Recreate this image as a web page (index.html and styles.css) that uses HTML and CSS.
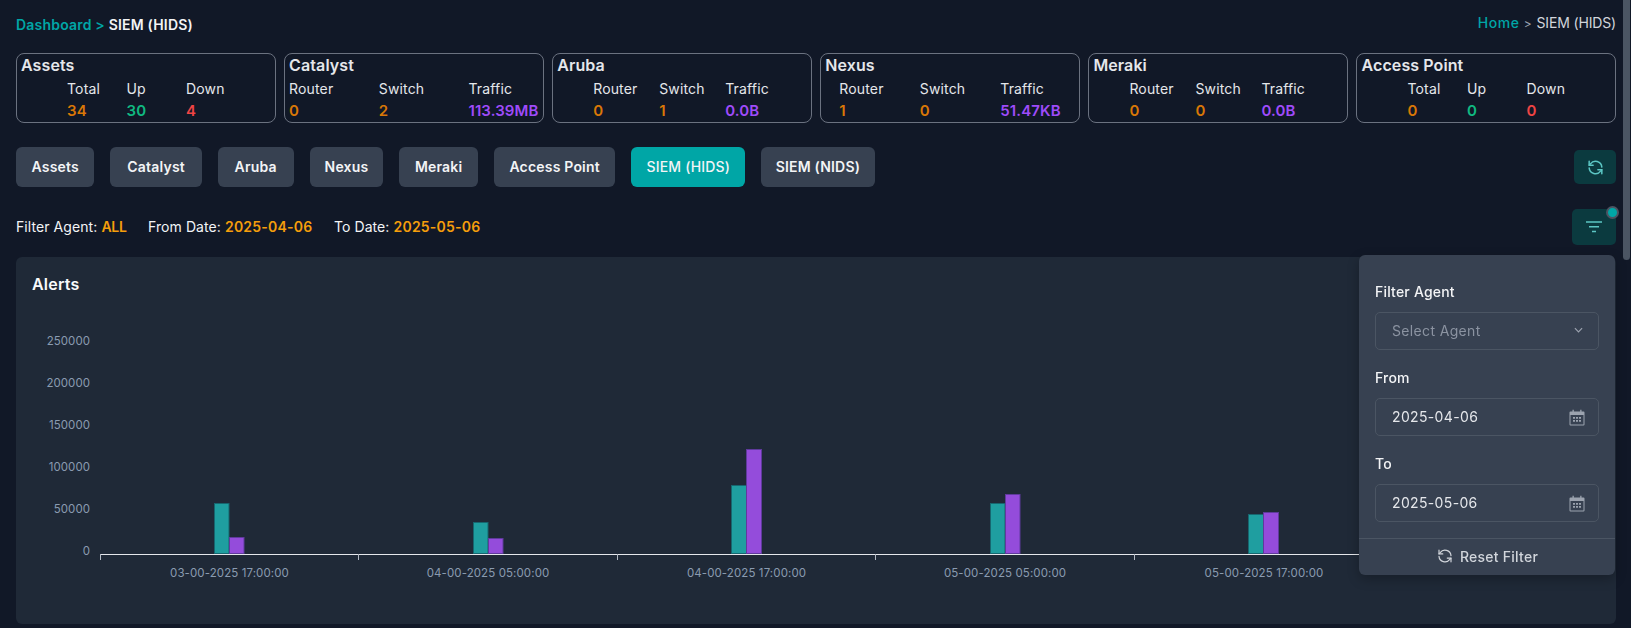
FILE: index.html
```html
<!DOCTYPE html>
<html lang="en">
<head>
<meta charset="utf-8">
<title>SIEM (HIDS)</title>
<link rel="stylesheet" href="styles.css">
</head>
<body>
<svg class="defs" width="0" height="0" aria-hidden="true">
  <defs>
    <symbol id="i-refresh" viewBox="0 0 24 24">
      <path d="M20 11.5A8 8 0 0 0 5.6 7.4L4 9.2" />
      <path d="M4 4.2v5h5" />
      <path d="M4 12.5a8 8 0 0 0 14.4 4.1l1.6-1.8" />
      <path d="M20 19.8v-5h-5" />
    </symbol>
    <symbol id="i-cal" viewBox="0 0 16 17">
      <path class="cal-body" d="M1.5 2.5h13a1 1 0 0 1 1 1v12a1 1 0 0 1-1 1h-13a1 1 0 0 1-1-1v-12a1 1 0 0 1 1-1zM1.5 6v9.500h13V6z" />
      <path class="cal-body" d="M3.500 .8h1.300v2.500H3.500zM11.200 .8h1.300v2.500h-1.300zM4 8h2v1.700H4zM7 8h2v1.700H7zM10 8h2v1.700h-2zM4 11h2v1.700H4zM7 11h2v1.700H7zM10 11h2v1.700h-2z" />
    </symbol>
  </defs>
</svg>
<div class="page">
  <header class="crumbs">
    <div class="crumb-left"><span class="teal">Dashboard &gt;</span> SIEM (HIDS)</div>
    <div class="crumb-right"><span class="teal">Home</span><span class="sep">&gt;</span>SIEM (HIDS)</div>
  </header>

  <section class="cards">
    <article class="card">
      <h3 class="card-title">Assets</h3>
      <div class="stats stats-assets">
        <span>Total</span><span>Up</span><span>Down</span>
        <b class="orange">34</b><b class="green">30</b><b class="red">4</b>
      </div>
    </article>
    <article class="card">
      <h3 class="card-title">Catalyst</h3>
      <div class="stats stats-catalyst">
        <span>Router</span><span>Switch</span><span>Traffic</span>
        <b class="orange">0</b><b class="orange">2</b><b class="purple">113.39MB</b>
      </div>
    </article>
    <article class="card">
      <h3 class="card-title">Aruba</h3>
      <div class="stats stats-aruba">
        <span>Router</span><span>Switch</span><span>Traffic</span>
        <b class="orange">0</b><b class="orange">1</b><b class="purple">0.0B</b>
      </div>
    </article>
    <article class="card">
      <h3 class="card-title">Nexus</h3>
      <div class="stats stats-nexus">
        <span>Router</span><span>Switch</span><span>Traffic</span>
        <b class="orange">1</b><b class="orange">0</b><b class="purple">51.47KB</b>
      </div>
    </article>
    <article class="card">
      <h3 class="card-title">Meraki</h3>
      <div class="stats stats-aruba">
        <span>Router</span><span>Switch</span><span>Traffic</span>
        <b class="orange">0</b><b class="orange">0</b><b class="purple">0.0B</b>
      </div>
    </article>
    <article class="card">
      <h3 class="card-title">Access Point</h3>
      <div class="stats stats-assets">
        <span>Total</span><span>Up</span><span>Down</span>
        <b class="orange">0</b><b class="green">0</b><b class="red">0</b>
      </div>
    </article>
  </section>

  <nav class="tabs">
    <button class="tab">Assets</button>
    <button class="tab tab-l">Catalyst</button>
    <button class="tab tab-l">Aruba</button>
    <button class="tab tab-s">Nexus</button>
    <button class="tab">Meraki</button>
    <button class="tab">Access Point</button>
    <button class="tab tab-s active">SIEM (HIDS)</button>
    <button class="tab tab-xs">SIEM (NIDS)</button>
    <button class="icon-btn refresh" aria-label="Refresh"><svg class="ico"><use href="#i-refresh"/></svg></button>
  </nav>

  <div class="filter-row">
    <div class="filter-text">
      <span>Filter Agent: <b class="all">ALL</b></span>
      <span>From Date: <b>2025-04-06</b></span>
      <span>To Date: <b>2025-05-06</b></span>
    </div>
    <button class="icon-btn filter" aria-label="Filter">
      <svg class="ico-filter" viewBox="0 0 16 12"><path d="M0 1h16M3 5.800h10M6 10.500h4"/></svg>
      <span class="dot"></span>
    </button>

    <aside class="popover">
      <div class="pop-body">
        <label class="pop-label">Filter Agent</label>
        <div class="field">
          <span class="placeholder">Select Agent</span>
          <svg class="chev" viewBox="0 0 10 6"><path d="M1 1l4 4 4-4"/></svg>
        </div>
        <label class="pop-label">From</label>
        <div class="field">
          <span>2025-04-06</span>
          <svg class="cal"><use href="#i-cal"/></svg>
        </div>
        <label class="pop-label">To</label>
        <div class="field">
          <span>2025-05-06</span>
          <svg class="cal"><use href="#i-cal"/></svg>
        </div>
      </div>
      <div class="pop-foot">
        <svg class="ico-reset"><use href="#i-refresh"/></svg>
        <span>Reset Filter</span>
      </div>
    </aside>
  </div>

  <section class="panel">
    <h2 class="panel-title">Alerts</h2>
    <svg class="chart" width="1600" height="328" viewBox="16 296 1600 328">
      <g class="ylab">
        <text x="90" y="345">250000</text>
        <text x="90" y="387">200000</text>
        <text x="90" y="429">150000</text>
        <text x="90" y="471">100000</text>
        <text x="90" y="513">50000</text>
        <text x="90" y="555">0</text>
      </g>
      <g class="bar-t">
        <rect x="214.500" y="503.500" width="14.500" height="50"/>
        <rect x="473.500" y="522.500" width="14.500" height="31"/>
        <rect x="731.500" y="485.500" width="15" height="68"/>
        <rect x="990.500" y="503.500" width="14.500" height="50"/>
        <rect x="1248.500" y="514.500" width="15" height="39"/>
      </g>
      <g class="bar-p">
        <rect x="229.500" y="537.500" width="14.500" height="16"/>
        <rect x="488.500" y="538.500" width="14.500" height="15"/>
        <rect x="746.500" y="449.500" width="15" height="104"/>
        <rect x="1005.500" y="494.500" width="14.500" height="59"/>
        <rect x="1263.500" y="512.500" width="15" height="41"/>
      </g>
      <path class="axis" d="M100 554.500H1359"/>
      <path class="tick" d="M100.500 554v6M358.500 554v6M617.500 554v6M875.500 554v6M1134.500 554v6"/>
      <g class="xlab">
        <text x="229.500" y="577">03-00-2025 17:00:00</text>
        <text x="488" y="577">04-00-2025 05:00:00</text>
        <text x="746.500" y="577">04-00-2025 17:00:00</text>
        <text x="1005" y="577">05-00-2025 05:00:00</text>
        <text x="1264" y="577">05-00-2025 17:00:00</text>
      </g>
    </svg>
  </section>
</div>
<div class="scroll-thumb"></div>
</body>
</html>
```
FILE: styles.css
```css
* { box-sizing: border-box; }
html, body { margin: 0; height: 628px; overflow: hidden; }
body {
  background: #111827;
  color: #f3f4f6;
  font-family: Inter, "Open Sans", "Liberation Sans", sans-serif;
  font-size: 14px;
}
.defs { position: absolute; }
.page { padding: 13px 15px 0 16px; width: 1631px; }
.teal { color: #00a6a6; }

.crumbs { display: flex; justify-content: space-between; align-items: flex-start; height: 40px; }
.crumb-left { font-weight: 600; line-height: 24px; letter-spacing: .2px; }
.crumb-right { line-height: 20px; color: #d1d5db; letter-spacing: -.15px; }
.crumb-right .teal { font-weight: 500; letter-spacing: .6px; }
.sep { margin: 0 5px 0 4px; color: #9ca3af; font-size: 12px; }

.cards { display: grid; grid-template-columns: repeat(6, minmax(0, 1fr)); gap: 8.6px; }
.card {
  height: 70px;
  border: 1px solid #6b7280;
  border-radius: 8px;
  padding: 0 4px;
}
.card-title {
  margin: 0;
  font-size: 16px;
  font-weight: 600;
  line-height: 22px;
  color: #e5e7eb;
  letter-spacing: .1px;
}
.stats { display: grid; grid-template-rows: 21px 23px; line-height: 21px; margin-top: 2px; color: #e5e7eb; }
.stats b { font-size: 15px; font-weight: 600; line-height: 23px; letter-spacing: .1px; white-space: nowrap; }
.stats span { letter-spacing: .15px; }
.stats-assets { grid-template-columns: repeat(3, 59.500px); padding-left: 46px; }
.stats-catalyst { grid-template-columns: repeat(3, 89.700px); }
.stats-aruba { grid-template-columns: repeat(3, 66px); padding-left: 36px; }
.stats-nexus { grid-template-columns: repeat(3, 80.500px); padding-left: 14px; }
.orange { color: #d97706; }
.green { color: #10b981; }
.red { color: #ef4444; }
.purple { color: #9f4bfa; }

.tabs { display: flex; align-items: center; gap: 16px; margin-top: 24px; height: 40px; }
.tab {
  height: 40px;
  padding: 0 15.500px;
  border: 0;
  border-radius: 6px;
  background: #374151;
  color: #f3f4f6;
  font: 600 14px/20px Inter, "Liberation Sans", sans-serif;
  letter-spacing: .2px;
}
.tab-l { padding: 0 16.800px; }
.tab-s { padding: 0 15px; }
.tab-xs { padding: 0 14.500px; }
.tab.active { background: #00a6a6; font-weight: 500; }
.icon-btn {
  border: 0;
  border-radius: 5px;
  background: #0b3a3f;
  padding: 0;
  display: flex;
  align-items: center;
  justify-content: center;
  color: #5cc6c4;
  position: relative;
}
.refresh { width: 42px; height: 34px; margin-left: auto; }
.ico, .ico-reset { fill: none; stroke: currentColor; stroke-width: 1.900; stroke-linecap: round; stroke-linejoin: round; }
.ico { width: 19px; height: 19px; }
.ico-reset { width: 18px; height: 18px; stroke-width: 1.600; }

.filter-row {
  position: relative;
  display: flex;
  justify-content: space-between;
  align-items: center;
  margin-top: 22px;
  height: 36px;
}
.filter-text { display: flex; gap: 21.500px; padding-bottom: 1px; letter-spacing: .08px; color: #f3f4f6; }
.filter-text b { color: #f59e0b; font-weight: 600; letter-spacing: .22px; }
.filter-text .all { letter-spacing: -.3px; }
.filter { width: 44px; height: 36px; }
.ico-filter { width: 16px; height: 12px; fill: none; stroke: #5cc6c4; stroke-width: 1.600; }
.dot {
  position: absolute;
  top: -3px;
  right: -3px;
  width: 13px;
  height: 13px;
  border-radius: 50%;
  background: #00a6a6;
  border: 2px solid #4b5563;
}

.popover {
  position: absolute;
  top: 46px;
  right: 1px;
  width: 256px;
  height: 320px;
  background: #374151;
  border-radius: 6px;
  box-shadow: 0 4px 12px rgba(0, 0, 0, .25);
  z-index: 2;
  display: flex;
  flex-direction: column;
}
.pop-body { padding: 27px 16px 15px; flex: 1; }
.pop-label { display: block; line-height: 20px; margin-bottom: 10px; font-weight: 500; letter-spacing: .2px; color: #f3f4f6; }
.field {
  height: 38px;
  margin-bottom: 18px;
  border: 1px solid #4b5563;
  border-radius: 5px;
  padding: 0 13px 2px 16px;
  display: flex;
  align-items: center;
  justify-content: space-between;
  letter-spacing: .35px;
  color: #e5e7eb;
}
.field:last-child { margin-bottom: 0; }
.placeholder { color: #8b93a1; }
.chev { width: 9px; height: 6px; margin-right: 2px; fill: none; stroke: #9ca3af; stroke-width: 1.300; }
.cal { width: 16px; height: 17px; position: relative; top: 1px; }
.cal-body { fill: #9ca3af; fill-rule: evenodd; }
.pop-foot {
  height: 37px;
  border-top: 1px solid #4b5563;
  padding-bottom: 2px;
  display: flex;
  align-items: center;
  justify-content: center;
  gap: 6px;
  color: #d1d5db;
  font-weight: 500;
  letter-spacing: .25px;
}

.panel {
  margin-top: 12px;
  height: 367px;
  background: #1f2937;
  border-radius: 6px;
}
.panel-title {
  margin: 0;
  padding: 16px 16px 0;
  height: 39px;
  font-size: 16px;
  font-weight: 600;
  line-height: 22px;
  color: #f9fafb;
  letter-spacing: .2px;
}
.chart { display: block; }
.ylab text { font-size: 11.500px; fill: #8a9bb0; text-anchor: end; letter-spacing: .05px; }
.xlab text { font-size: 11.500px; fill: #8a9bb0; text-anchor: middle; letter-spacing: .1px; }
.bar-t rect { fill: #1f9ea0; stroke: #17666f; stroke-width: 1; }
.bar-p rect { fill: #944cdb; stroke: #5f3a9c; stroke-width: 1; }
.axis { stroke: #e5e7eb; stroke-width: 1; }
.tick { stroke: #b4bac4; stroke-width: 1; fill: none; }

.scroll-thumb {
  position: fixed;
  top: 0;
  left: 1623px;
  width: 7px;
  height: 260px;
  background: #4b5563;
  border-radius: 0 0 4px 4px;
}
```
